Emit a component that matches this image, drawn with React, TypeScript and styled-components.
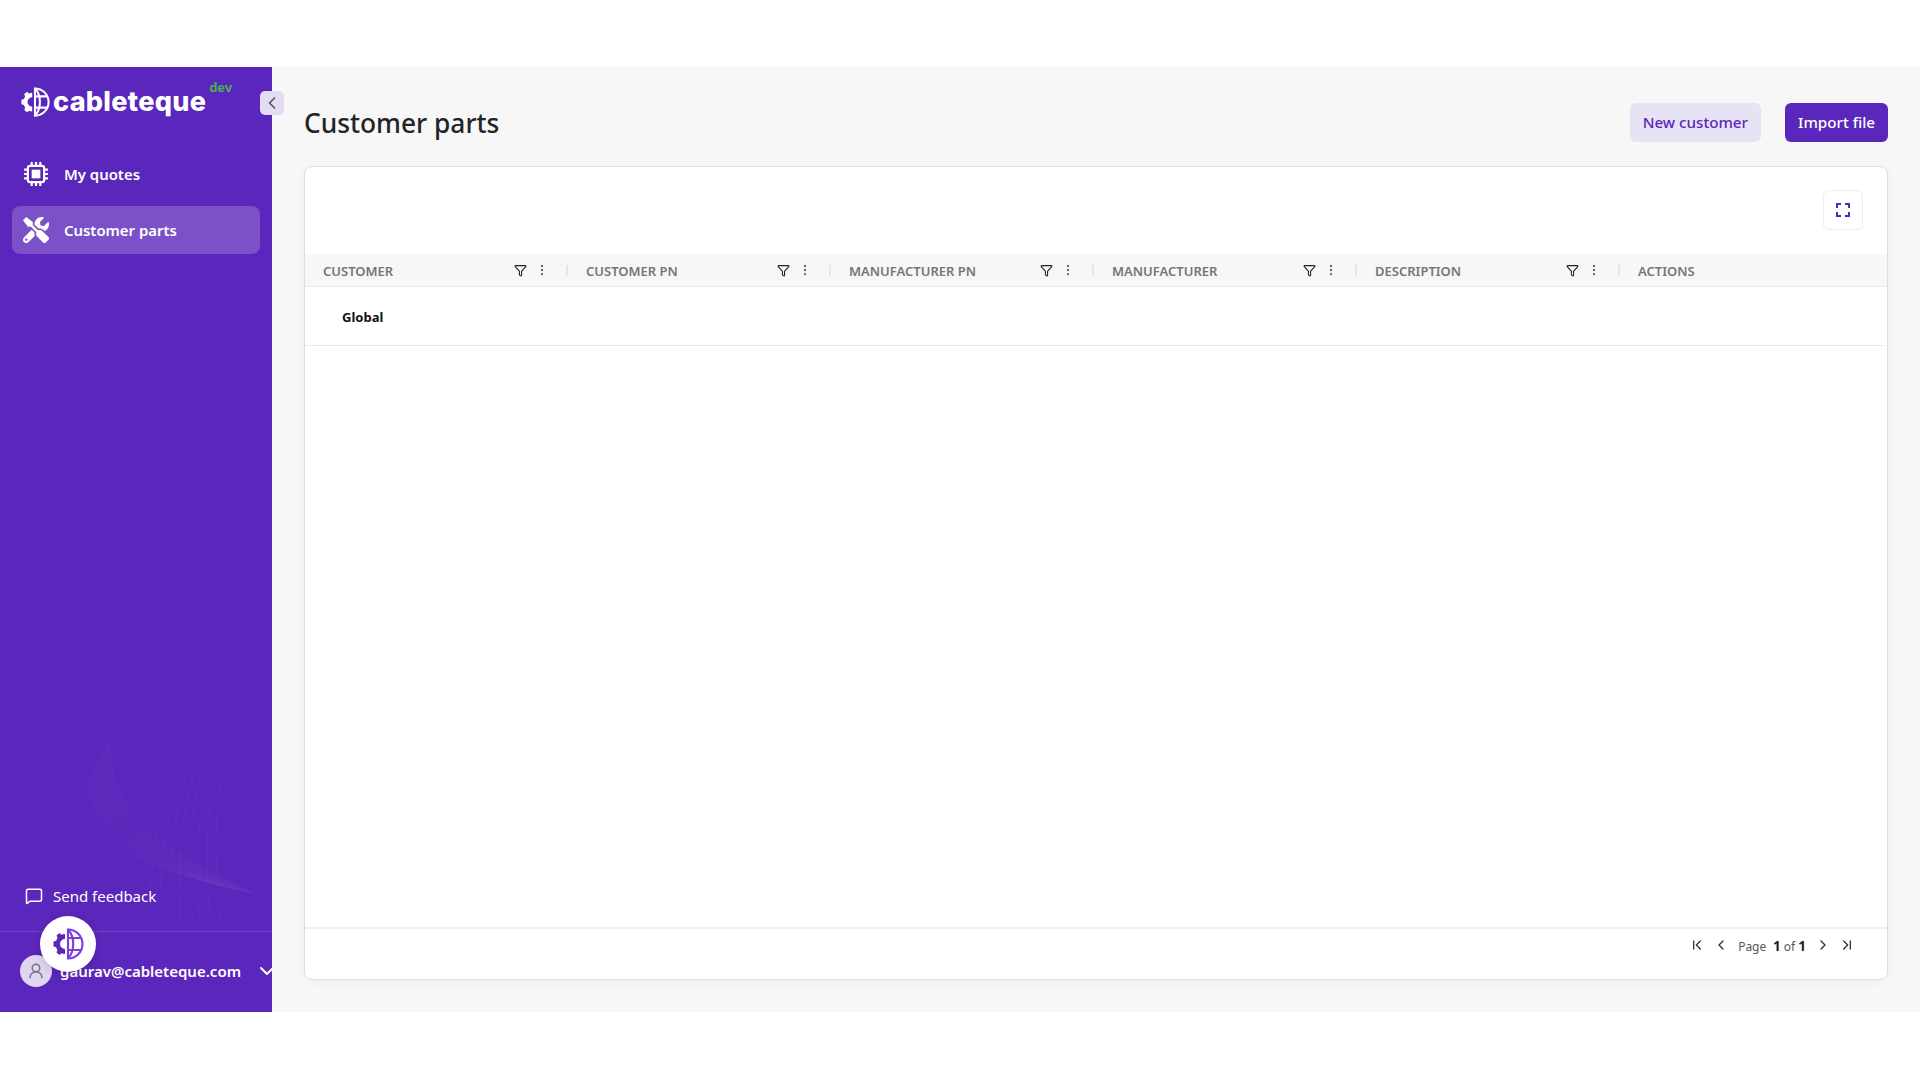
import styled, { createGlobalStyle } from "styled-components";
import {
  ChevronDown,
  ChevronFirst,
  ChevronLast,
  ChevronLeft,
  ChevronRight,
  EllipsisVertical,
  Funnel,
  MessageSquare,
  UserRound,
} from "lucide-react";
import { FaTools } from "react-icons/fa";

const GlobalStyle = createGlobalStyle`
  html, body { margin: 0; padding: 0; background: #fff; }
  * { box-sizing: border-box; }
  body { font-family: "Noto Sans", "Open Sans", sans-serif; }
`;

const Page = styled.div`
  width: 1920px;
  height: 1080px;
  padding-top: 67px;
  overflow: hidden;
`;

const Shell = styled.div`
  display: flex;
  height: 945px;
  background: #f7f7f7;
`;

const Sidebar = styled.aside`
  position: relative;
  width: 272px;
  flex: none;
  display: flex;
  flex-direction: column;
  background: #5b26bb;
  color: #fff;
`;

const Waves = styled.svg`
  position: absolute;
  left: 0;
  bottom: 80px;
  pointer-events: none;
`;

const Brand = styled.div`
  display: flex;
  align-items: center;
  height: 70px;
  padding: 0 0 0 20px;
  margin-bottom: 13px;
  position: relative;
`;

const BrandName = styled.span`
  margin-left: 3px;
  font-family: "Inter", sans-serif;
  font-size: 27px;
  font-weight: 800;
  letter-spacing: 0.3px;
  line-height: 32px;
`;

const DevTag = styled.span`
  align-self: flex-start;
  margin: 12px 0 0 3px;
  font-size: 13px;
  font-weight: 700;
  line-height: 16px;
  color: #4caf50;
`;

const CollapseButton = styled.button`
  position: absolute;
  top: 24px;
  left: 260px;
  width: 24px;
  height: 24px;
  padding: 0;
  border: 0;
  border-radius: 5px;
  display: flex;
  align-items: center;
  justify-content: center;
  background: #e4dcf5;
  color: #555;
  z-index: 3;
`;

const Nav = styled.nav`
  display: flex;
  flex-direction: column;
  gap: 9px;
  padding: 0 12px;
  position: relative;
`;

const NavItem = styled.a<{ $active?: boolean }>`
  display: flex;
  align-items: center;
  gap: 15px;
  height: ${(p) => (p.$active ? "48px" : "47px")};
  padding-left: 11px;
  border-radius: 8px;
  font-size: 14.9px;
  font-weight: 600;
  background: ${(p) => (p.$active ? "rgba(255,255,255,0.2)" : "transparent")};
`;

const SidebarFooter = styled.div`
  position: relative;
  margin-top: auto;
`;

const Feedback = styled.div`
  display: flex;
  align-items: center;
  gap: 10px;
  height: 36px;
  padding: 0 0 2px 25px;
  margin-bottom: 16px;
  font-size: 15px;
`;

const UserRow = styled.div`
  display: flex;
  align-items: center;
  height: 81px;
  padding: 0 0 2px 20px;
  border-top: 1px solid rgba(255, 255, 255, 0.15);
  overflow: hidden;
`;

const Avatar = styled.div`
  width: 32px;
  height: 32px;
  flex: none;
  border-radius: 50%;
  display: flex;
  align-items: center;
  justify-content: center;
  background: #dfd5f0;
  color: #777;
`;

const Email = styled.span`
  margin-left: 8px;
  width: 195px;
  flex: none;
  font-size: 15px;
  font-weight: 600;
`;

const EmailChevron = styled(ChevronDown)`
  flex: none;
`;

const FloatingLogo = styled.div`
  position: absolute;
  left: 40px;
  top: 37px;
  width: 56px;
  height: 56px;
  border-radius: 50%;
  display: flex;
  align-items: center;
  justify-content: center;
  background: #fff;
  box-shadow: 0 2px 8px rgba(0, 0, 0, 0.15);
  z-index: 2;
`;

const Main = styled.main`
  flex: 1;
  min-width: 0;
  display: flex;
  flex-direction: column;
  padding: 36px 32px 32px;
`;

const TopBar = styled.div`
  display: flex;
  align-items: center;
  height: 39px;
  margin-bottom: 24px;
`;

const Title = styled.h1`
  flex: 1;
  margin: 2px 0 0;
  font-size: 26.3px;
  font-weight: 500;
  line-height: 39px;
  color: #212529;
`;

const Button = styled.button<{ $primary?: boolean }>`
  height: 39px;
  margin-left: 24px;
  padding: 0 13px 2px;
  border: 0;
  border-radius: 6px;
  font-family: inherit;
  font-size: 15.2px;
  font-weight: 500;
  color: ${(p) => (p.$primary ? "#fff" : "#5b26bb")};
  background: ${(p) => (p.$primary ? "#5b26bb" : "#e8e3f4")};
`;

const Card = styled.section`
  flex: 1;
  display: flex;
  flex-direction: column;
  background: #fff;
  border: 1px solid #dedede;
  border-radius: 8px;
  box-shadow: 0 2px 12px rgba(0, 0, 0, 0.04);
  overflow: hidden;
`;

const CardToolbar = styled.div`
  display: flex;
  justify-content: flex-end;
  align-items: flex-start;
  height: 87px;
  padding: 23px 24px 0 0;
`;

const FullscreenButton = styled.button`
  width: 40px;
  height: 40px;
  padding: 0;
  display: flex;
  align-items: center;
  justify-content: center;
  background: #fff;
  border: 1px solid #eee;
  border-radius: 6px;
`;

const HeaderRow = styled.div`
  display: grid;
  grid-template-columns: repeat(5, 263px) 1fr;
  height: 33px;
  background: #f7f7f7;
  border-bottom: 1px solid #e8e8ea;
`;

const HeaderCell = styled.div`
  display: flex;
  align-items: center;
  padding-left: 18px;
`;

const HeaderLabel = styled.span`
  flex: 1;
  margin-top: 2px;
  font-size: 13px;
  font-weight: 600;
  color: #757575;
`;

const HeaderTools = styled.span`
  display: flex;
  align-items: center;
  color: #222;
`;

const Kebab = styled(EllipsisVertical)`
  margin: 0 17px 0 8px;
  color: #666;
`;

const ColumnSep = styled.i`
  width: 2px;
  height: 11px;
  background: #e3e6ea;
`;

const BodyRow = styled.div`
  display: flex;
  align-items: center;
  height: 59px;
  margin-right: 3px;
  padding: 2px 0 0 37px;
  border-bottom: 1px solid #eaeaec;
  font-size: 13px;
  font-weight: 700;
  color: #111;
`;

const TableBody = styled.div`
  flex: 1;
`;

const Pager = styled.div`
  display: flex;
  align-items: center;
  justify-content: flex-end;
  height: 52px;
  padding: 0 28px 18px 0;
  border-top: 2px solid #eee;
  color: #444;
  font-size: 13px;
`;

const PagerButton = styled.span`
  display: flex;
  margin: 0 4px;
  color: #333;
`;

const PagerText = styled.span`
  margin: 2px 5px 0 5px;
  font-size: 12px;
  color: #555;
  white-space: pre;
`;

const Strong = styled.b`
  font-size: 13.5px;
  font-weight: 700;
  color: #222;
`;

function LogoMark({ size, gear, globe }: { size: number; gear: string; globe: string }) {
  return (
    <svg width={size} height={size} viewBox="0 0 32 32" fill="none">
      <path
        d="M13 6v5a5 5 0 0 0 0 10v5c-1.300 0-2.500-.3-3.500-.8L7.500 27l-3-2.500 1-2.500c-.6-.9-1-1.800-1.300-2.800L1.500 18.500v-5l2.700-.7c.3-1 .7-1.900 1.300-2.800l-1-2.500L7.500 5l2 1.800c1-.5 2.200-.8 3.500-.8z"
        fill={gear}
      />
      <g stroke={globe} strokeWidth="2.200">
        <path d="M16 1.500a14.500 14.500 0 0 1 0 29z" />
        <path d="M16 1.500c7 7.500 7 21.500 0 29" />
        <path d="M16 10h13M16 22h13" />
      </g>
    </svg>
  );
}

function ChipIcon() {
  return (
    <svg width="26" height="26" viewBox="0 0 24 24" fill="none" stroke="#fff">
      <rect x="4.500" y="4.500" width="15" height="15" rx="2" strokeWidth="2" />
      <rect x="8" y="8" width="8" height="8" fill="#fff" stroke="none" />
      <path
        d="M8 1v3M12 1v3M16 1v3M8 20v3M12 20v3M16 20v3M1 8h3M1 12h3M1 16h3M20 8h3M20 12h3M20 16h3"
        strokeWidth="2"
      />
    </svg>
  );
}

function FullscreenIcon() {
  return (
    <svg width="14" height="14" viewBox="0 0 14 14" fill="none" stroke="#5b26bb" strokeWidth="2">
      <path d="M1 5V1h4M9 1h4v4M13 9v4H9M5 13H1V9" />
    </svg>
  );
}

function SidebarWaves() {
  const ridge = Array.from({ length: 12 }, (_, i) => i);
  const arches = Array.from({ length: 8 }, (_, i) => i);
  return (
    <Waves width="272" height="400" viewBox="0 0 272 400" fill="none">
      {ridge.map((i) => (
        <path
          key={i}
          d={`M${88 + i * 2} ${250 - i * 4}C${96 + i} ${310 - i * 3} ${130 + i * 2} ${328 - i} ${214 + i * 4} ${352 + i}`}
          stroke="#fff"
          strokeOpacity={0.045}
        />
      ))}
      {arches.map((i) => (
        <path
          key={`arch-${i}`}
          d={`M${150 + i * 10} 390C${150 + i * 8} ${260 - i * 6} ${190 + i * 6} ${150 + i * 8} 272 ${130 + i * 14}`}
          stroke="#fff"
          strokeOpacity={0.03}
        />
      ))}
    </Waves>
  );
}

const columns = ["CUSTOMER", "CUSTOMER PN", "MANUFACTURER PN", "MANUFACTURER", "DESCRIPTION"];

export default function App() {
  return (
    <Page>
      <GlobalStyle />
      <Shell>
        <Sidebar>
          <SidebarWaves />
          <Brand>
            <LogoMark size={30} gear="#fff" globe="#fff" />
            <BrandName>cableteque</BrandName>
            <DevTag>dev</DevTag>
          </Brand>
          <CollapseButton>
            <ChevronLeft size={20} />
          </CollapseButton>
          <Nav>
            <NavItem>
              <ChipIcon />
              My quotes
            </NavItem>
            <NavItem $active>
              <FaTools size={26} />
              Customer parts
            </NavItem>
          </Nav>
          <SidebarFooter>
            <Feedback>
              <MessageSquare size={18} />
              Send feedback
            </Feedback>
            <UserRow>
              <Avatar>
                <UserRound size={18} />
              </Avatar>
              <Email>gaurav@cableteque.com</Email>
              <EmailChevron size={24} />
            </UserRow>
            <FloatingLogo>
              <LogoMark size={32} gear="#5b26bb" globe="#7b3fe4" />
            </FloatingLogo>
          </SidebarFooter>
        </Sidebar>
        <Main>
          <TopBar>
            <Title>Customer parts</Title>
            <Button>New customer</Button>
            <Button $primary>Import file</Button>
          </TopBar>
          <Card>
            <CardToolbar>
              <FullscreenButton>
                <FullscreenIcon />
              </FullscreenButton>
            </CardToolbar>
            <HeaderRow>
              {columns.map((name) => (
                <HeaderCell key={name}>
                  <HeaderLabel>{name}</HeaderLabel>
                  <HeaderTools>
                    <Funnel size={13} strokeWidth={2} />
                    <Kebab size={14} />
                    <ColumnSep />
                  </HeaderTools>
                </HeaderCell>
              ))}
              <HeaderCell>
                <HeaderLabel>ACTIONS</HeaderLabel>
              </HeaderCell>
            </HeaderRow>
            <TableBody>
              <BodyRow>Global</BodyRow>
            </TableBody>
            <Pager>
              <PagerButton>
                <ChevronFirst size={16} />
              </PagerButton>
              <PagerButton>
                <ChevronLeft size={16} />
              </PagerButton>
              <PagerText>
                Page <Strong> 1</Strong> of <Strong>1</Strong>
              </PagerText>
              <PagerButton>
                <ChevronRight size={16} />
              </PagerButton>
              <PagerButton>
                <ChevronLast size={16} />
              </PagerButton>
            </Pager>
          </Card>
        </Main>
      </Shell>
    </Page>
  );
}
